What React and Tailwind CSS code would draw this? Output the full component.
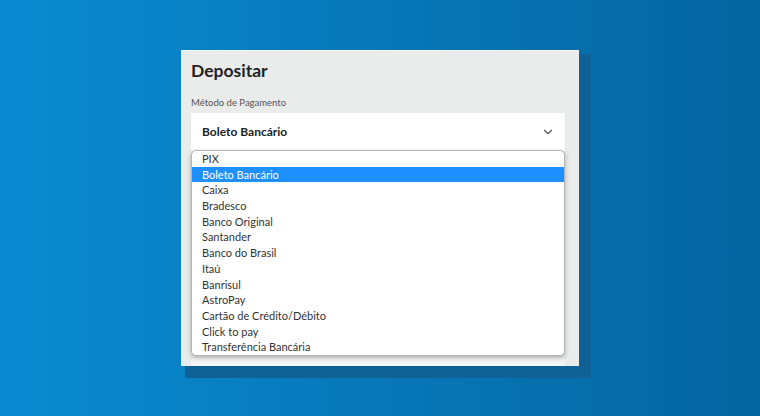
import { ChevronDown } from "lucide-react";

const metodos = [
  "PIX",
  "Boleto Bancário",
  "Caixa",
  "Bradesco",
  "Banco Original",
  "Santander",
  "Banco do Brasil",
  "Itaú",
  "Banrisul",
  "AstroPay",
  "Cartão de Crédito/Débito",
  "Click to pay",
  "Transferência Bancária",
];

const App = () => {
  const selected = "Boleto Bancário";

  return (
    <div className="w-[760px] h-[416px] bg-gradient-to-r from-[#0a8bd1] to-[#0565a0] flex justify-center pt-[50px] font-['Lato','Noto_Sans',sans-serif]">
      <div className="relative shrink-0 w-[398px] h-[316px] bg-[#eaebeb] border-t border-[#f4f5f5] shadow-[8px_8px_0_4px_#0f6196] pl-[10px] pr-[14px] overflow-hidden">
        <h1 className="mt-[8px] text-[17.5px] font-bold text-[#222] leading-[24px]">Depositar</h1>
        <p className="mt-[14px] text-[9.5px] text-[#555] leading-[12px]">Método de Pagamento</p>

        {/* select */}
        <div className="mt-[4px] h-[38px] bg-white flex items-center justify-between pl-[11px] pr-[10px] shadow-[0_1px_2px_rgba(0,0,0,0.06)]">
          <span className="text-[12px] font-bold text-[#222]">{selected}</span>
          <ChevronDown size={14} strokeWidth={2} className="text-[#555]" />
        </div>

        {/* campos por baixo da lista */}
        <div className="mt-[139px] h-[36px] bg-white border border-[#dcdcdc] rounded-[3px]" />
        <div className="mt-[32px] h-[10px] bg-[#f4f5f5] rounded-t-[3px]" />

        {/* lista aberta */}
        <ul className="absolute left-[10px] top-[99px] w-[374px] bg-white border border-[#b3b3b3] rounded-[5px] shadow-[0_2px_5px_rgba(0,0,0,0.25)] overflow-hidden">
          {metodos.map((m) => (
            <li
              key={m}
              className={
                m === selected
                  ? "h-[15.7px] leading-[15.7px] pl-[10px] text-[11px] bg-[#1e90ff] text-white"
                  : "h-[15.7px] leading-[15.7px] pl-[10px] text-[11px] text-[#333]"
              }
            >
              {m}
            </li>
          ))}
        </ul>
      </div>
    </div>
  );
};

export default App;
